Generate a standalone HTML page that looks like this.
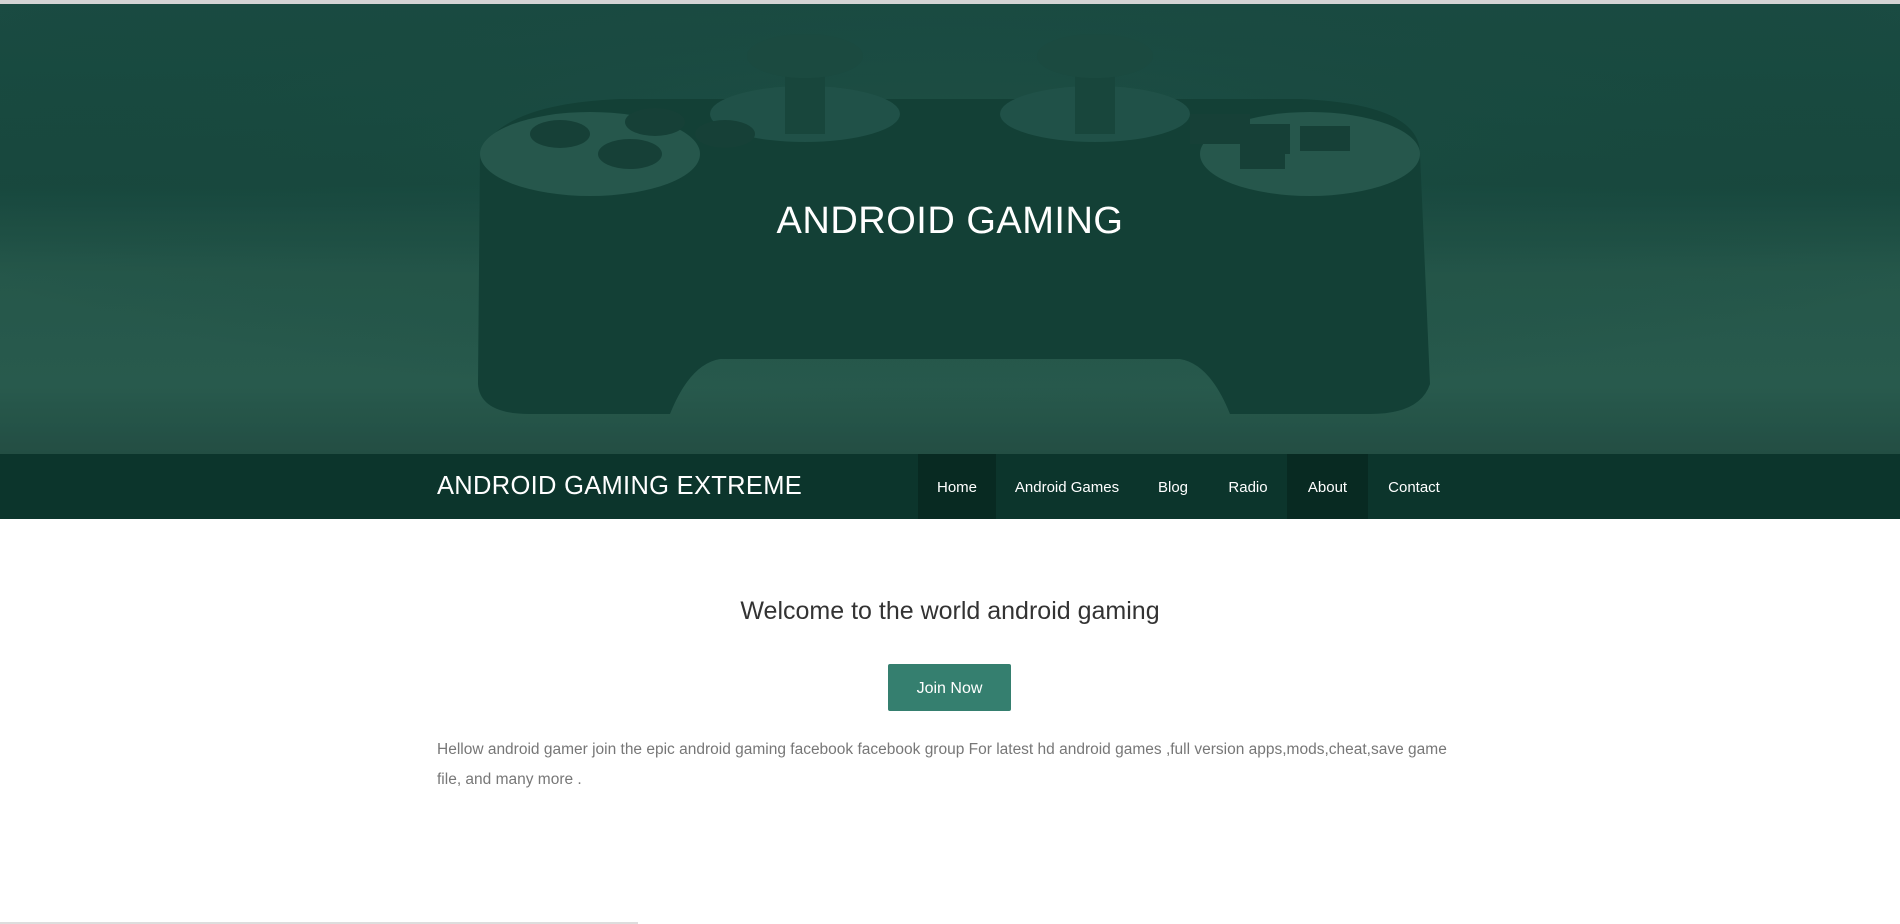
<!DOCTYPE html>
<html><head><meta charset="utf-8"><style>
*{margin:0;padding:0;box-sizing:border-box}
body{width:1900px;height:924px;overflow:hidden;background:#fff;font-family:"Liberation Sans",sans-serif;position:relative}
.topbar{position:absolute;left:0;top:0;width:1900px;height:4px;background:#d4d4d4}
.hero{position:absolute;left:0;top:4px;width:1900px;height:450px;background:linear-gradient(180deg,#1d4c43 0%,#1a483f 40%,#2a5a4d 60%,#2d5d50 85%,#274f45 100%);overflow:hidden}
.hero svg{position:absolute;left:0;top:0}
.hero h1{position:absolute;left:0;width:1900px;top:196px;text-align:center;color:#fff;font-weight:300;font-size:38px;letter-spacing:0.5px}
.nav{position:absolute;left:0;top:454px;width:1900px;height:65px;background:#0c352c}
.brand{position:absolute;left:437px;top:18px;color:#fff;font-size:25.5px;font-weight:300;letter-spacing:0.3px}
.nav a{position:absolute;top:0;height:65px;line-height:67px;color:#fff;font-size:15px;text-decoration:none;text-align:center}
.act{background:#082a22}
.welcome{position:absolute;left:0;width:1900px;top:597px;text-align:center;font-size:25px;color:#333}
.btn{position:absolute;left:888px;top:664px;width:123px;height:47px;background:#357f6f;color:#fff;font-size:16px;line-height:49px;text-align:center;border-radius:2px}
.p{position:absolute;left:437px;top:735px;width:1020px;font-size:15.5px;line-height:30px;color:#777}
.bline{position:absolute;left:0;top:922px;width:638px;height:2px;background:#ddd}
</style></head><body>
<div class="topbar"></div>
<div class="hero">
<svg width="1900" height="450" viewBox="0 0 1900 450">
<defs><radialGradient id="g" cx="50%" cy="30%" r="60%"><stop offset="0" stop-color="#2a5a4f" stop-opacity=".4"/><stop offset="1" stop-color="#0f3a31" stop-opacity="0"/></radialGradient></defs>
<rect width="1900" height="450" fill="url(#g)"/>
<path d="M480 150 Q500 100 620 95 L1300 95 Q1420 100 1420 150 L1430 380 Q1420 410 1370 410 L1230 410 Q1210 360 1180 355 L720 355 Q690 360 670 410 L530 410 Q480 410 478 380 Z" fill="#143f36"/>
<ellipse cx="590" cy="150" rx="110" ry="42" fill="#2b5a4f"/>
<ellipse cx="1310" cy="150" rx="110" ry="42" fill="#2b5a4f"/>
<ellipse cx="805" cy="110" rx="95" ry="28" fill="#24534a"/>
<ellipse cx="1095" cy="110" rx="95" ry="28" fill="#24534a"/>
<rect x="785" y="50" width="40" height="80" fill="#1b463d"/>
<rect x="1075" y="50" width="40" height="80" fill="#1b463d"/>
<ellipse cx="805" cy="52" rx="58" ry="22" fill="#1e4a41"/>
<ellipse cx="1095" cy="52" rx="58" ry="22" fill="#1e4a41"/>
<g fill="#183f37"><ellipse cx="655" cy="118" rx="30" ry="14"/><ellipse cx="560" cy="130" rx="30" ry="14"/><ellipse cx="630" cy="150" rx="32" ry="15"/><ellipse cx="725" cy="130" rx="30" ry="14"/>
<rect x="1190" y="110" width="60" height="30"/><rect x="1250" y="120" width="40" height="30"/><rect x="1300" y="122" width="50" height="25"/><rect x="1240" y="140" width="45" height="25"/></g>
<rect x="0" y="0" width="1900" height="450" fill="#0f4a3c" opacity=".15"/>
</svg>
<h1>ANDROID GAMING</h1>
</div>
<div class="nav">
<div class="brand">ANDROID GAMING EXTREME</div>
<a class="act" style="left:918px;width:78px">Home</a>
<a style="left:1002px;width:130px">Android Games</a>
<a style="left:1143px;width:60px">Blog</a>
<a style="left:1218px;width:60px">Radio</a>
<a class="act" style="left:1287px;width:81px">About</a>
<a style="left:1374px;width:80px">Contact</a>
</div>
<div class="welcome">Welcome to the world android gaming</div>
<div class="btn">Join Now</div>
<div class="p">Hellow android gamer join the epic android gaming facebook facebook group For latest hd android games ,full version apps,mods,cheat,save game file, and many more .</div>
<div class="bline"></div>
</body></html>
